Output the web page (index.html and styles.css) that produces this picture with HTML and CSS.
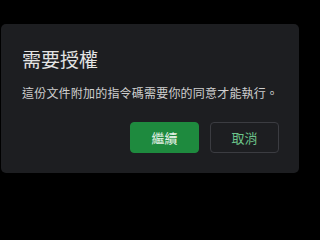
FILE: index.html
```html
<!DOCTYPE html>
<html lang="zh-Hant">
<head>
<meta charset="utf-8">
<link rel="stylesheet" href="styles.css">
</head>
<body>
<div class="screen">
  <div class="dialog">
    <h1 class="title">需要授權</h1>
    <p class="message">這份文件附加的指令碼需要你的同意才能執行。</p>
    <div class="actions">
      <button class="btn btn-primary">繼續</button>
      <button class="btn btn-secondary">取消</button>
    </div>
  </div>
</div>
</body>
</html>
```

FILE: styles.css
```css
html, body {
  margin: 0;
  padding: 0;
  background: #000;
  width: 300px;
  height: 200px;
  overflow: hidden;
}
.screen {
  padding: 24px 1px 0 1px;
  font-family: "Noto Sans CJK TC", "Noto Sans", sans-serif;
}
.dialog {
  background: #1d1e21;
  border-radius: 5px;
  height: 149px;
  box-sizing: border-box;
  padding: 22px 20px 20px 21px;
  display: flex;
  flex-direction: column;
}
.title {
  margin: 0;
  font-size: 19px;
  font-weight: 400;
  line-height: 26px;
  color: #e4e4e4;
}
.message {
  margin: 12px 0 0 0;
  font-size: 12px;
  letter-spacing: 0.2px;
  line-height: 18px;
  color: #cfcfcf;
}
.actions {
  margin-top: auto;
  display: flex;
  justify-content: flex-end;
  gap: 11px;
}
.btn {
  width: 69px;
  height: 31px;
  border-radius: 4px;
  font-family: "Noto Sans CJK TC", sans-serif;
  font-size: 13px;
  padding: 0;
  box-sizing: border-box;
}
.btn-primary {
  background: #1e8a3e;
  border: 1px solid #1e8a3e;
  color: #e6f2e8;
}
.btn-secondary {
  background: #1d1e21;
  border: 1px solid #3b3c41;
  color: #6cc48a;
}
```
